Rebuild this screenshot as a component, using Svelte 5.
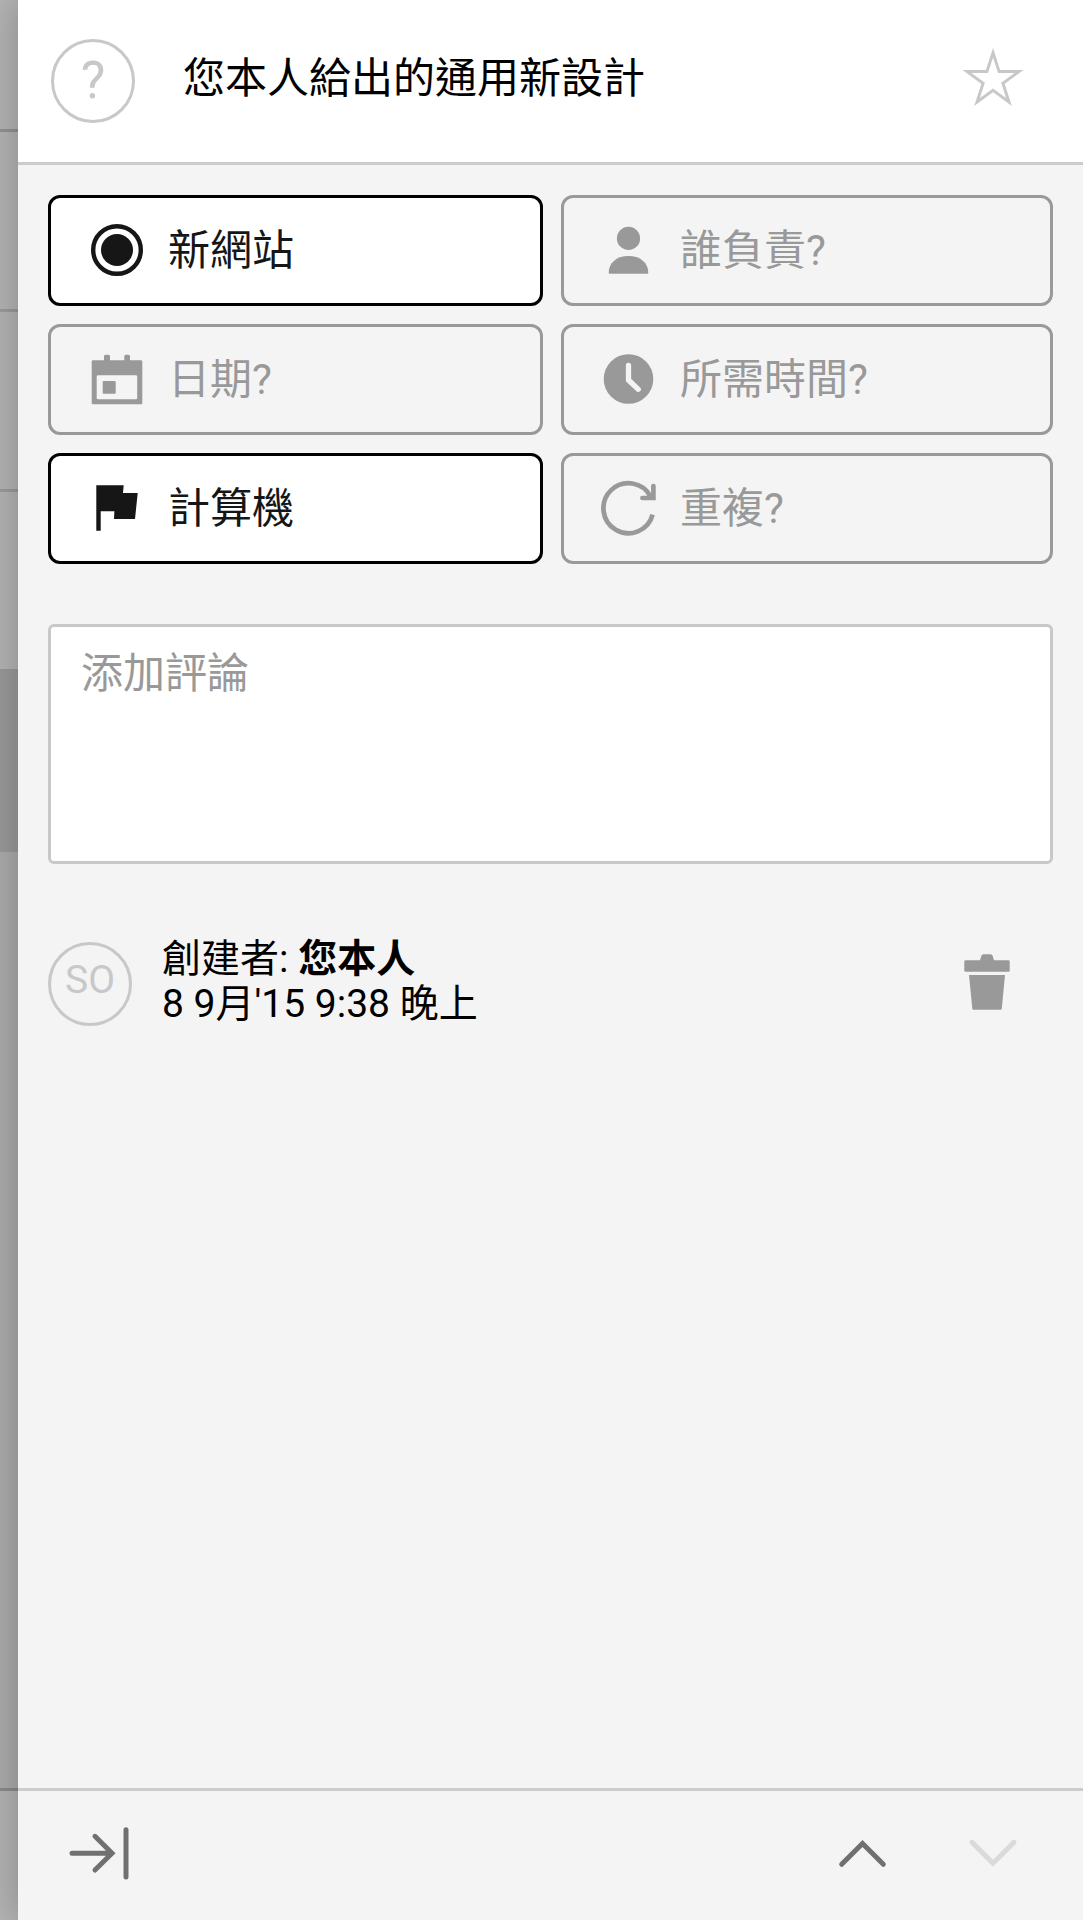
<script>
	let comment = $state('');

	const fields = [
		{ icon: 'project', label: '新網站', filled: true },
		{ icon: 'person', label: '誰負責?', filled: false },
		{ icon: 'calendar', label: '日期?', filled: false },
		{ icon: 'clock', label: '所需時間?', filled: false },
		{ icon: 'flag', label: '計算機', filled: true },
		{ icon: 'repeat', label: '重複?', filled: false }
	];
</script>

<div class="screen">
	<div class="backdrop">
		<div class="row first"></div>
		<div class="row"></div>
		<div class="row"></div>
		<div class="row plain"></div>
		<div class="row selected"></div>
		<div class="row rest"></div>
	</div>

	<main class="panel">
		<header>
			<div class="avatar unknown">?</div>
			<h1>您本人給出的通用新設計</h1>
			<button class="star" aria-label="star">
				<svg width="66" height="66" viewBox="-33 -33 66 66">
					<path d="M0-27.2 6.1-8.4H25.9L9.9 3.2 16 22 0 10.4-16 22-9.9 3.2-25.9-8.4H-6.1Z" fill="none" stroke="currentColor" stroke-width="3" />
				</svg>
			</button>
		</header>

		<section class="content">
			<div class="fields">
				{#each fields as field}
					<button class="field" class:filled={field.filled}>
						<svg width="60" height="105" viewBox="0 0 60 105">
							{#if field.icon === 'project'}
								<circle cx="30" cy="52" r="23.8" fill="none" stroke="currentColor" stroke-width="4.4" />
								<circle cx="30" cy="52" r="16" />
							{:else if field.icon === 'person'}
								<circle cx="28.5" cy="40.4" r="11.6" />
								<path d="M8.7 74.7C8.7 65.5 16 58 28.5 58S48.3 65.5 48.3 74.7Q48.3 75.7 47.3 75.7H9.7Q8.7 75.7 8.7 74.7Z" />
							{:else if field.icon === 'calendar'}
								<path fill-rule="evenodd" d="M6 33.3H17V29.2Q17 27.7 18.5 27.7H21.5Q23 27.7 23 29.2V33.3H37.3V29.2Q37.3 27.7 38.8 27.7H41.5Q43 27.7 43 29.2V33.3H54Q55.3 33.3 55.3 34.6V76Q55.3 77.3 54 77.3H6Q4.7 77.3 4.7 76V34.6Q4.7 33.3 6 33.3ZM11 48.3Q9.7 48.3 9.7 49.6V71Q9.7 72.3 11 72.3H49Q50.2 72.3 50.2 71V49.6Q50.2 48.3 49 48.3Z" />
								<rect x="15.7" y="54" width="13" height="12.7" rx="1" />
							{:else if field.icon === 'clock'}
								<circle cx="28.5" cy="52" r="24.8" />
								<path class="hands" d="M28.5 38.3V53L38.3 62.3" />
							{:else if field.icon === 'flag'}
								<path d="M9.3 29.3H36.7L36 37H50.7L48 63H27L27.4 55.3H13.7V74.7H9.3Z" />
							{:else}
								<path class="line" d="M50.5 40.5A25 25 0 1 0 52.6 58.6" stroke-linecap="butt" />
								<path class="line" d="M42.4 42H53.4V30" stroke-linecap="round" />
							{/if}
						</svg>
						<span>{field.label}</span>
					</button>
				{/each}
			</div>

			<textarea bind:value={comment} placeholder="添加評論"></textarea>

			<div class="activity">
				<div class="avatar initials">SO</div>
				<p>
					<span>創建者: <b>您本人</b></span>
					<span>8 9月'15 9:38 晚上</span>
				</p>
				<button class="trash" aria-label="delete">
					<svg width="46" height="56" viewBox="0 0 46 56">
						<path d="M1.5 6.3H16L17.4 1.8Q18 .3 19.3 .3H26.7Q28 .3 28.6 1.8L30 6.3H44.5Q45.7 6.3 45.7 7.5V16.5Q45.7 17.7 44.5 17.7H1.5Q.3 17.7 .3 16.5V7.5Q.3 6.3 1.5 6.3Z" />
						<path d="M5 21H41L37.8 54.5Q37.7 55.7 36.5 55.7H9.5Q8.4 55.7 8.3 54.5Z" />
					</svg>
				</button>
			</div>
		</section>

		<footer>
			<button aria-label="close">
				<svg width="66" height="60" viewBox="0 0 66 60">
					<path d="M5 30.3H43M28 13.3 45 30.3 28 47M59 6.7V54" />
				</svg>
			</button>
			<div class="spacer"></div>
			<button aria-label="previous">
				<svg width="60" height="60" viewBox="0 0 60 60">
					<path d="M8.7 41.3 29.5 20.5 50.3 41.3" stroke-linejoin="miter" />
				</svg>
			</button>
			<button class="disabled" aria-label="next">
				<svg width="60" height="60" viewBox="0 0 60 60">
					<path d="M9 19.3 30 40.2 51 19.3" stroke-linejoin="miter" />
				</svg>
			</button>
		</footer>
	</main>
</div>

<style>
	:global(body) {
		margin: 0;
	}

	.screen {
		display: grid;
		grid-template-columns: 18px 1065px;
		height: 1920px;
		overflow: hidden;
		font-family: Roboto, 'Noto Sans CJK TC', sans-serif;
	}

	.backdrop {
		display: flex;
		flex-direction: column;
		background: #b3b3b3;
	}

	.row {
		box-sizing: border-box;
		height: 180px;
		border-bottom: 3px solid #9a9a9a;
	}

	.row.first {
		height: 132px;
		border-color: #929292;
	}

	.row.plain {
		height: 177px;
		border: 0;
	}

	.row.selected {
		height: 183px;
		background: #999;
		border: 0;
	}

	.row.rest {
		height: 939px;
		background: #ababab;
		border-color: #8a8a8a;
	}

	.panel {
		display: flex;
		flex-direction: column;
		background: #f4f4f4;
		box-shadow: 0 0 36px rgba(0, 0, 0, 0.25);
	}

	header {
		display: flex;
		align-items: center;
		box-sizing: border-box;
		height: 165px;
		padding: 0 57px 0 33px;
		background: #fff;
		border-bottom: 3px solid #ccc;
	}

	.avatar {
		box-sizing: border-box;
		width: 84px;
		height: 84px;
		border: 3px solid #c8c8c8;
		border-radius: 50%;
		color: #c8c8c8;
		text-align: center;
	}

	.unknown {
		font-size: 52px;
		line-height: 78px;
	}

	.initials {
		font-size: 39px;
		line-height: 70px;
	}

	h1 {
		flex: 1;
		margin: 0 0 4px 48px;
		font-size: 42px;
		font-weight: 400;
		line-height: 60px;
	}

	button {
		padding: 0;
		border: 0;
		background: none;
		font: inherit;
		color: inherit;
	}

	svg {
		display: block;
		fill: currentColor;
	}

	.star {
		color: #c8c8c8;
		margin-bottom: 2px;
	}

	.content {
		flex: 1;
		padding: 30px 30px 0;
	}

	.fields {
		display: grid;
		grid-template-columns: 495px 492px;
		gap: 18px;
	}

	.field {
		display: flex;
		align-items: center;
		gap: 21px;
		box-sizing: border-box;
		height: 111px;
		padding-left: 36px;
		border: 3px solid #999;
		border-radius: 12px;
		color: #999;
		font-size: 42px;
	}

	.field:nth-child(even) {
		gap: 20px;
	}

	.field span {
		padding-bottom: 8px;
	}

	.filled {
		background: #fff;
		border-color: #000;
		color: #161616;
	}

	.hands {
		fill: none;
		stroke: #f4f4f4;
		stroke-width: 5.3;
		stroke-linecap: round;
	}

	.line {
		fill: none;
		stroke: currentColor;
		stroke-width: 4.7;
	}

	textarea {
		display: block;
		box-sizing: border-box;
		width: 1005px;
		height: 240px;
		margin-top: 60px;
		padding: 16px 30px;
		border: 3px solid #c8c8c8;
		border-radius: 6px;
		background: #fff;
		font: inherit;
		font-size: 42px;
		line-height: 62px;
		resize: none;
	}

	textarea::placeholder {
		color: #999;
	}

	.activity {
		display: flex;
		margin-top: 78px;
	}

	p {
		display: flex;
		flex-direction: column;
		flex: 1;
		margin: -5px 0 0 30px;
		font-size: 39px;
		line-height: 45px;
	}

	.trash {
		align-self: flex-start;
		margin: 12px 43px 0 0;
		color: #999;
	}

	footer {
		display: flex;
		align-items: center;
		gap: 70px;
		box-sizing: border-box;
		height: 132px;
		padding: 0 60px 5px 49px;
		border-top: 3px solid #ccc;
		color: #707070;
	}

	footer svg {
		fill: none;
		stroke: currentColor;
		stroke-width: 5;
		stroke-linecap: round;
	}

	.spacer {
		flex: 1;
	}

	.disabled {
		color: #dadada;
	}
</style>
